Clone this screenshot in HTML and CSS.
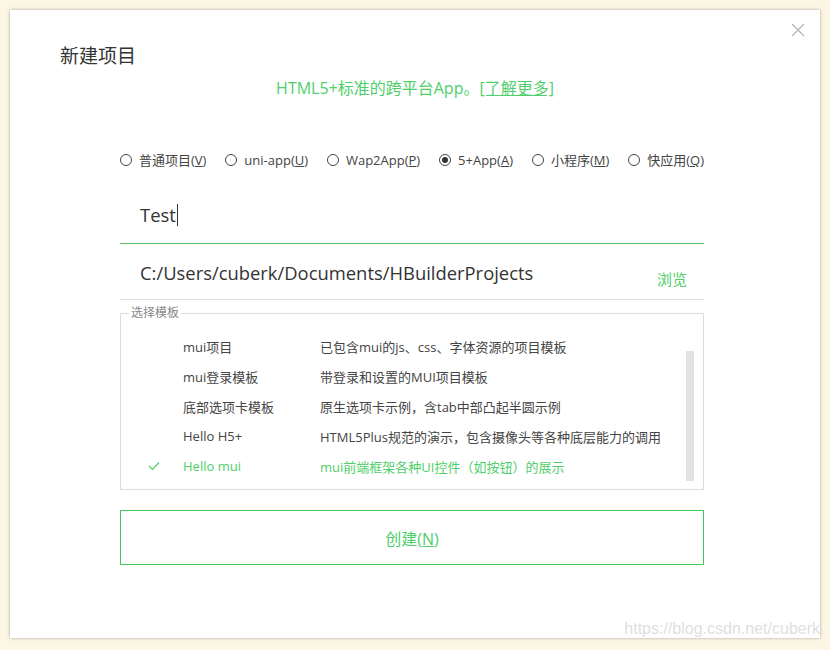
FILE: index.html
```html
<!DOCTYPE html>
<html lang="zh-CN">

<head>
    <meta charset="UTF-8">
    <meta name="viewport" content="width=device-width, initial-scale=1.0">
    <title>新建项目</title>
    <link rel="stylesheet" href="styles.css">
</head>

<body>
    <div class="dialog">
        <span class="close-btn">
            <svg width="14" height="14" viewBox="0 0 14 14">
                <path d="M1 1 L13 13 M13 1 L1 13" stroke="#b4b4b4" stroke-width="1.2" fill="none" />
            </svg>
        </span>

        <h1 class="title">新建项目</h1>
        <div class="subtitle">HTML5+标准的跨平台App。<a href="#">[了解更多]</a></div>

        <div class="content">
            <div class="types">
                <label class="radio"><span class="dot"></span>普通项目(<u>V</u>)</label>
                <label class="radio"><span class="dot"></span>uni-app(<u>U</u>)</label>
                <label class="radio"><span class="dot"></span>Wap2App(<u>P</u>)</label>
                <label class="radio checked"><span class="dot"></span>5+App(<u>A</u>)</label>
                <label class="radio"><span class="dot"></span>小程序(<u>M</u>)</label>
                <label class="radio"><span class="dot"></span>快应用(<u>Q</u>)</label>
            </div>

            <div class="field name-field">
                <span class="field-text">Test</span><span class="caret"></span>
            </div>

            <div class="field path-field">
                <span class="field-text">C:/Users/cuberk/Documents/HBuilderProjects</span>
                <a href="#" class="browse">浏览</a>
            </div>

            <fieldset class="templates">
                <legend>选择模板</legend>
                <div class="tpl-list">
                    <div class="tpl-row">
                        <span class="tpl-check"></span>
                        <span class="tpl-name">mui项目</span>
                        <span class="tpl-desc">已包含mui的js、css、字体资源的项目模板</span>
                    </div>
                    <div class="tpl-row">
                        <span class="tpl-check"></span>
                        <span class="tpl-name">mui登录模板</span>
                        <span class="tpl-desc">带登录和设置的MUI项目模板</span>
                    </div>
                    <div class="tpl-row">
                        <span class="tpl-check"></span>
                        <span class="tpl-name">底部选项卡模板</span>
                        <span class="tpl-desc">原生选项卡示例，含tab中部凸起半圆示例</span>
                    </div>
                    <div class="tpl-row">
                        <span class="tpl-check"></span>
                        <span class="tpl-name">Hello H5+</span>
                        <span class="tpl-desc">HTML5Plus规范的演示，包含摄像头等各种底层能力的调用</span>
                    </div>
                    <div class="tpl-row selected">
                        <span class="tpl-check">
                            <svg width="12" height="10" viewBox="0 0 12 10">
                                <path d="M1 5 L4.5 8.5 L11 1.5" stroke="#4fcf6a" stroke-width="1.2" fill="none" />
                            </svg>
                        </span>
                        <span class="tpl-name">Hello mui</span>
                        <span class="tpl-desc">mui前端框架各种UI控件（如按钮）的展示</span>
                    </div>
                    <div class="scrollbar"></div>
                </div>
            </fieldset>

            <button class="create-btn">创建(<u>N</u>)</button>
        </div>

        <div class="watermark">https://blog.csdn.net/cuberk</div>
    </div>
</body>

</html>
```

FILE: styles.css
```css
* {
    margin: 0;
    padding: 0;
    box-sizing: border-box;
}

body {
    font-family: 'Open Sans', 'Noto Sans CJK SC', sans-serif;
    background: #fcf6e5;
    color: #333;
    width: 830px;
    height: 650px;
    overflow: hidden;
}

.dialog {
    position: relative;
    margin: 10px 0 0 10px;
    width: 810px;
    height: 628px;
    background: #fff;
    box-shadow: 0 0 3px rgba(0, 0, 0, 0.35);
    padding-top: 32px;
}

.close-btn {
    position: absolute;
    top: 13px;
    right: 15px;
    line-height: 0;
}

.title {
    font-size: 19px;
    font-weight: normal;
    line-height: 28px;
    padding-left: 50px;
    color: #333;
}

.subtitle {
    text-align: center;
    font-size: 16px;
    line-height: 20px;
    margin-top: 8px;
    color: #4fcf6a;
}

.subtitle a {
    color: #4fcf6a;
    text-decoration: underline;
}

.content {
    margin-left: 110px;
    width: 584px;
}

.types {
    display: flex;
    justify-content: space-between;
    margin-top: 52px;
    font-size: 13px;
    line-height: 20px;
    color: #444;
}

.radio {
    display: flex;
    align-items: center;
}

.dot {
    width: 12px;
    height: 12px;
    border: 1px solid #444;
    border-radius: 50%;
    margin-right: 7px;
    display: inline-flex;
    align-items: center;
    justify-content: center;
}

.radio.checked .dot::after {
    content: "";
    width: 6px;
    height: 6px;
    border-radius: 50%;
    background: #333;
}

.field {
    display: flex;
    align-items: center;
    padding-left: 20px;
    font-size: 18.4px;
    color: #333;
}

.name-field {
    height: 74px;
    padding-top: 16px;
    border-bottom: 1px solid #58b96a;
}

.caret {
    display: inline-block;
    width: 1px;
    height: 22px;
    background: #333;
    margin-left: 1px;
}

.path-field {
    height: 56px;
    border-bottom: 1px solid #dedede;
    justify-content: space-between;
    padding-top: 2px;
}

.browse {
    color: #4fcf6a;
    font-size: 15px;
    text-decoration: none;
    margin-right: 17px;
    margin-top: 12px;
}

.templates {
    margin-top: 6px;
    border: 1px solid #dcdcdc;
    height: 184px;
    padding: 0;
}

.templates legend {
    font-size: 12px;
    color: #888;
    margin-left: 8px;
    padding: 0 2px;
    line-height: 14px;
}

.tpl-list {
    position: relative;
    padding-top: 11px;
}

.tpl-row {
    display: flex;
    height: 30px;
    align-items: center;
    font-size: 13px;
    color: #444;
}

.tpl-check {
    width: 62px;
    padding-left: 27px;
    line-height: 0;
}

.tpl-name {
    width: 137px;
}

.tpl-row.selected {
    color: #4fcf6a;
}

.scrollbar {
    position: absolute;
    right: 9px;
    top: 31px;
    width: 8px;
    height: 130px;
    background: #e2e2e2;
}

.create-btn {
    display: block;
    width: 584px;
    height: 55px;
    margin-top: 20px;
    border: 1px solid #3ec85a;
    background: #fff;
    color: #4fcf6a;
    font-family: 'Open Sans', 'Noto Sans CJK SC', sans-serif;
    font-size: 16px;
}

.watermark {
    position: absolute;
    right: 0;
    bottom: 0;
    font-family: 'Liberation Sans', sans-serif;
    font-size: 16px;
    color: rgba(190, 190, 190, 0.5);
}
```
